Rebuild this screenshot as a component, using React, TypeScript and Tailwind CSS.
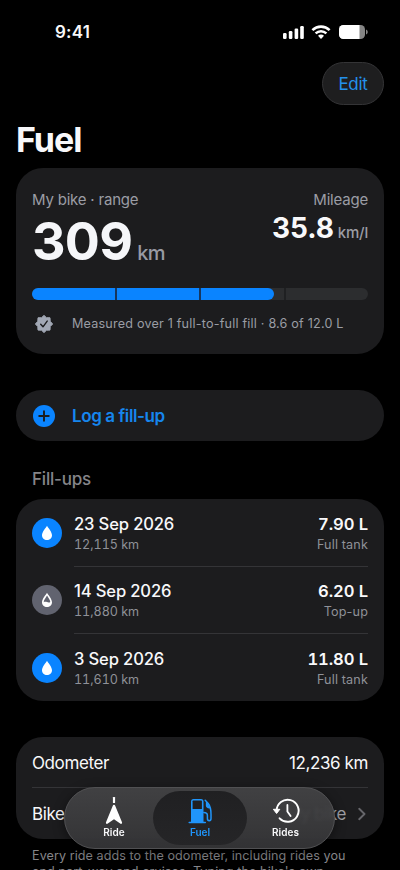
import React from "react";

function Drop({ hollow = false }: { hollow?: boolean }) {
  return (
    <span className={`flex h-[30px] w-[30px] shrink-0 items-center justify-center rounded-full ${hollow ? "bg-[#61636f]" : "bg-[#0a84ff]"}`}>
      <svg width="12" height="16" viewBox="0 0 12 16" fill="none">
        <path d="M6 .8C7.2 2.9 11 7 11 10.2c0 2.8-2.2 4.8-5 4.8s-5-2-5-4.8C1 7 4.8 2.9 6 .8Z" fill="#fff" />
        {hollow && <path d="M6 3.5C7.2 5.5 9.100 7.900 9.300 9.900c-1 1-2.200.8-3.300.2-1.100-.5-2.300-.6-3.300.1C2.700 8.200 4.800 5.600 6 3.500Z" fill="#61636f" />}
      </svg>
    </span>
  );
}

const fills = [
  { date: "23 Sep 2026", km: "12,115 km", litres: "7.90 L", kind: "Full tank", hollow: false },
  { date: "14 Sep 2026", km: "11,880 km", litres: "6.20 L", kind: "Top-up", hollow: true },
  { date: "3 Sep 2026", km: "11,610 km", litres: "11.80 L", kind: "Full tank", hollow: false },
];

function StatusBar() {
  return (
    <header className="flex h-[62px] items-start justify-between pl-[55px] pr-8 pt-[21px]">
      <span className="text-[17px] font-semibold leading-[22px] tracking-[0.2px]">9:41</span>
      <div className="flex items-center pt-[3px]">
        <svg width="21" height="16" viewBox="0 0 21 16" fill="#fff">
          <rect x="0" y="9" width="3.600" height="6" rx="1.200" />
          <rect x="5.800" y="7" width="3.600" height="8" rx="1.200" />
          <rect x="11.600" y="4.500" width="3.600" height="10.500" rx="1.200" />
          <rect x="17.200" y="2" width="3.600" height="13" rx="1.200" />
        </svg>
        <svg className="ml-[7px]" width="20" height="16" viewBox="0 0 20 16" fill="none">
          <path d="M1.4 6.1C6.3 1.5 13.7 1.5 18.6 6.1" stroke="#fff" strokeWidth="2.6" />
          <path d="M4.6 9.4c3.1-2.9 7.7-2.9 10.8 0" stroke="#fff" strokeWidth="2.5" />
          <path d="M7 11.8c1.8-1.6 4.2-1.6 6 0L10 15Z" fill="#fff" />
        </svg>
        <svg className="ml-2" width="29" height="16" viewBox="0 0 29 16">
          <defs>
            <clipPath id="battery"><rect x="0" y="1" width="26" height="14" rx="4.4" /></clipPath>
          </defs>
          <g clipPath="url(#battery)">
            <rect x="0" y="1" width="26" height="14" fill="#858585" />
            <rect x="0" y="1" width="20.5" height="14" fill="#fff" />
          </g>
          <path d="M27 5.5c2.3.7 2.3 4.3 0 5Z" fill="#858585" />
        </svg>
      </div>
    </header>
  );
}

function RangeCard() {
  return (
    <section className="mt-[10px] h-[186px] rounded-[27px] bg-[#1c1c1e] px-4 pt-[21px]">
      <div className="flex h-[83px] justify-between">
        <div>
          <p className="text-[15px] leading-[21px] tracking-[-0.2px] text-[#9b9da5]">My bike · range</p>
          <p className="mt-[2px] flex items-baseline leading-[60px]">
            <span className="text-[52px] font-bold tracking-[-0.7px] text-[#f5f6f9]">309</span>
            <span className="ml-[5px] text-[20px] font-medium tracking-[-0.8px] text-[#989aa3]">km</span>
          </p>
        </div>
        <div className="text-right">
          <p className="text-[15px] leading-[21px] tracking-[-0.2px] text-[#9b9da5]">Mileage</p>
          <p className="flex items-baseline justify-end leading-9">
            <span className="text-[28px] font-bold tracking-[-0.1px]">35.8</span>
            <span className="ml-1 text-[15px] font-medium tracking-[-0.2px] text-[#9b9da5]">km/l</span>
          </p>
        </div>
      </div>
      <div className="mt-4 h-3 overflow-hidden rounded-full bg-[#2c2d2f]">
        <div className="grid h-3 grid-cols-[84.5px_84.5px_84.5px_1fr]">
          <span className="border-r-2 border-[#17365d] bg-[#0a84ff]" />
          <span className="border-r-2 border-[#17365d] bg-[#0a84ff]" />
          <span className="border-r-2 border-[#1f2022]"><i className="block h-3 w-[72.5px] rounded-r-full bg-[#0a84ff]" /></span>
          <span />
        </div>
      </div>
      <div className="mt-[14px] flex h-5 items-center">
        <svg className="ml-[2px] shrink-0" width="20" height="20" viewBox="0 0 20 20" fill="none">
          <path d="M10 1.400 12.500 3.700 16 3.800 16.200 7.300 18.600 10 16.200 12.600 16 16.100 12.500 16.200 10 18.600 7.500 16.200 4 16.100 3.800 12.600 1.400 10 3.800 7.300 4 3.800 7.500 3.700Z" fill="#a2a8b5" stroke="#a2a8b5" strokeLinejoin="round" />
          <path d="m6.700 10.300 2.300 2.500 4.200-5.700" stroke="#1c1c1e" strokeWidth="1.400" strokeLinecap="round" strokeLinejoin="round" />
        </svg>
        <span className="ml-[18px] whitespace-nowrap text-[12.6px] tracking-[0.2px] text-[#9a9ca4]">Measured over 1 full-to-full fill · 8.6 of 12.0 L</span>
      </div>
    </section>
  );
}

function TabBar() {
  return (
    <nav className="absolute left-16 top-[787px] flex h-[62px] w-[271px] items-center rounded-full border border-[#515153] bg-linear-to-b from-[#434345]/95 to-[#353537]/95 px-1 text-[10px] font-semibold leading-3 shadow-[0_3px_12px_rgba(0,0,0,0.45)] backdrop-blur-[1.5px]">
      <div className="flex h-[54px] w-[84px] shrink-0 flex-col items-center pl-[6px] pt-[5px]">
        <svg width="18" height="29" viewBox="0 0 18 29" fill="#fff">
          <rect x="7.900" y="1" width="2.200" height="6" rx=".6" />
          <path d="M9 8.700c.6 0 1 .4 1.200 1L17 26.300c.4 1.200-.8 2.100-1.800 1.300L9 23.200l-6.200 4.400c-1 .8-2.200-.1-1.800-1.300L7.800 9.700c.2-.6.6-1 1.200-1Z" />
        </svg>
        <span className="mt-px">Ride</span>
      </div>
      <div className="flex h-[54px] w-[94px] shrink-0 flex-col items-center rounded-full bg-linear-to-b from-[#202022] to-[#252527] pt-[5px] text-[#2095fa]">
        <svg width="26" height="29" viewBox="0 0 26 29" fill="none">
          <path d="M4 26V5.500Q4 3 6.500 3H14Q16.500 3 16.500 5.500V26" fill="#2095fa" />
          <path d="M5.600 5.300Q5.600 4.600 6.300 4.600H14.200Q14.900 4.600 14.900 5.300V13H5.600Z" fill="#202022" />
          <path d="M2.200 26.500H18.300" stroke="#2095fa" strokeWidth="1.500" strokeLinecap="round" />
          <path d="M18.200 4.300 21.200 7.500C23.200 10 24 14 24 18.200V22.500Q24 24.700 22.200 24.700T20.400 22.500V19.500Q20.400 16.500 16.800 16.500M19.600 6V9.700Q19.700 11.300 22.600 11.800" stroke="#2095fa" strokeWidth="1.500" strokeLinecap="round" strokeLinejoin="round" />
          <path d="M19.600 6.500v3.200q.2 1.400 2.800 1.800L21.200 8Z" fill="#2095fa" />
        </svg>
        <span className="mt-px">Fuel</span>
      </div>
      <div className="flex h-[54px] w-[83px] shrink-0 flex-col items-center pr-[6px] pt-[5px]">
        <svg width="28" height="29" viewBox="0 0 28 29" fill="none">
          <path d="M4.600 14.800a11 11 0 1 1 3 7.500" stroke="#fff" strokeWidth="1.900" strokeLinecap="round" />
          <path d="M1.400 13.300H7.800L4.600 17.500Z" fill="#fff" stroke="#fff" strokeLinejoin="round" />
          <path d="M15.400 9V15.500L18.600 20" stroke="#fff" strokeWidth="1.800" strokeLinecap="round" strokeLinejoin="round" />
        </svg>
        <span className="mt-px">Rides</span>
      </div>
    </nav>
  );
}

export default function App() {
  return (
    <div className="relative h-[870px] w-[400px] overflow-hidden bg-black font-['Inter','Liberation_Sans',sans-serif] text-[#f8f8fa]">
      <StatusBar />
      <main className="px-4">
        <div className="flex justify-end">
          <button className="h-[43px] w-[62px] rounded-full border border-[#343436] bg-[#1e1e1f] text-[17px] leading-[22px] tracking-[-0.3px] text-[#2491eb]">Edit</button>
        </div>
        <h1 className="mt-[14px] h-[39px] text-[34px] font-bold leading-[41px] tracking-[-1px]">Fuel</h1>
        <RangeCard />
        <button className="mt-[36px] flex h-[51px] w-full items-center rounded-full bg-[#1c1c1e] px-[17px] text-[#1686ee]">
          <svg width="22" height="22" viewBox="0 0 22 22">
            <circle cx="11" cy="11" r="11" fill="#0a84ff" />
            <path d="M11 6.200v9.600M6.200 11h9.600" stroke="#1c1c1e" strokeWidth="1.900" strokeLinecap="round" />
          </svg>
          <span className="ml-[17px] text-[17px] font-semibold leading-[22px] tracking-[-0.4px]">Log a fill-up</span>
        </button>
        <h2 className="ml-4 mt-[27px] text-[17px] font-medium leading-[22px] tracking-[-0.2px] text-[#858589]">Fill-ups</h2>
        <section className="mt-[9px] h-[202px] rounded-[27px] bg-[#1c1c1e] px-4">
          {fills.map((f, i) => (
            <div key={f.date} className="flex h-[67.5px] items-center">
              <Drop hollow={f.hollow} />
              <div className={`ml-3 flex h-full flex-1 items-center justify-between pt-[3px] ${i < 2 ? "border-b border-[#343437]" : ""}`}>
                <div>
                  <p className="text-[16.6px] font-medium leading-[21px] tracking-[-0.15px]">{f.date}</p>
                  <p className="text-[12.6px] tabular-nums leading-[19px] tracking-[-0.05px] text-[#8f9198]">{f.km}</p>
                </div>
                <div className="text-right">
                  <p className="text-[16.6px] font-semibold tabular-nums leading-[21px] tracking-[-0.1px]">{f.litres}</p>
                  <p className="text-[12.6px] leading-[19px] tracking-[0.15px] text-[#8f9198]">{f.kind}</p>
                </div>
              </div>
            </div>
          ))}
        </section>
        <section className="mt-[36px] h-[102px] rounded-[27px] bg-[#1c1c1e] px-4 text-[17px] leading-[22px] tracking-[-0.4px]">
          <div className="flex h-[51px] items-center justify-between border-b border-[#343437] pt-[2px]">
            <span>Odometer</span><span>12,236 km</span>
          </div>
          <div className="flex h-[51px] items-center justify-between pt-px">
            <span>Bike</span>
            <span className="flex items-center text-[#a0a0a6]">My bike
              <svg className="ml-3 mr-[2px]" width="8" height="14" viewBox="0 0 8 14" fill="none"><path d="m1.200 1.800 5.300 5.200-5.300 5.200" stroke="#66666b" strokeWidth="1.900" strokeLinecap="round" strokeLinejoin="round" /></svg>
            </span>
          </div>
        </section>
        <p className="ml-4 mt-[9px] whitespace-nowrap text-[12.6px] leading-4 tracking-[0.06px] text-[#858589]">
          Every ride adds to the odometer, including rides you<br />end part-way and cruises. Typing the bike's own
        </p>
      </main>
      <TabBar />
    </div>
  );
}
